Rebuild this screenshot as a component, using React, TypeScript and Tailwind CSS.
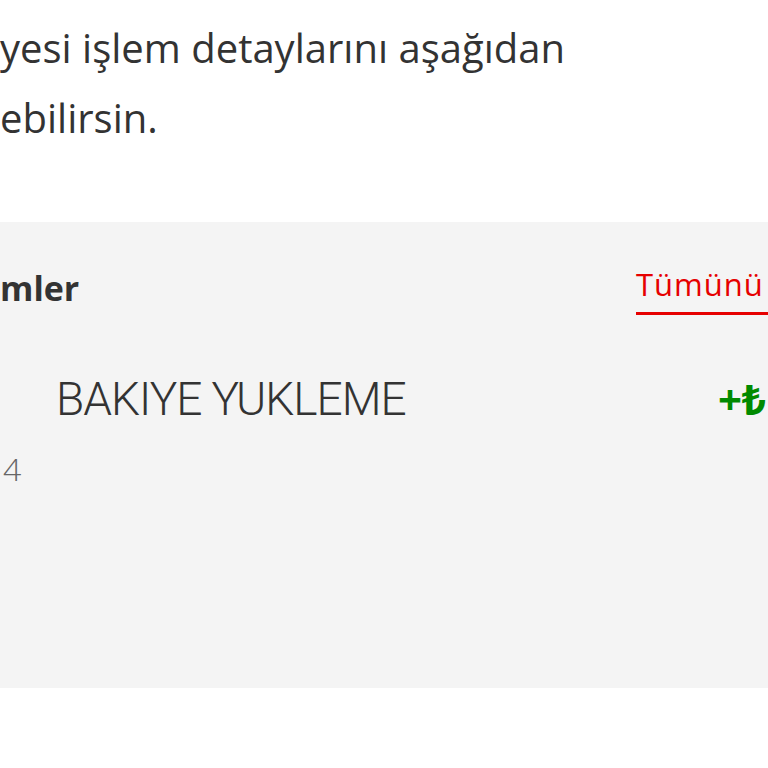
import React from "react";

export default function App() {
  return (
    <div className="w-[768px] h-[768px] overflow-hidden bg-white text-[#333333]" style={{ fontFamily: '"Open Sans", "Noto Sans", sans-serif' }}>
      <div className="pt-[13px] text-[40px] leading-[70px] whitespace-nowrap">
        <p>yesi işlem detaylarını aşağıdan</p>
        <p>ebilirsin.</p>
      </div>
      <div className="mt-[69px] h-[466px] bg-[#f4f4f4] flex flex-col">
        <div className="flex items-end justify-between pt-[44px] whitespace-nowrap">
          <h2 className="mb-[7px] text-[34px] font-bold leading-[40px] text-[#333333]">mler</h2>
          <a className="w-[132px] text-[31px] leading-[36px] tracking-[1px] text-[#e60000] border-b-[3px] border-[#e60000] pb-[10px]">Tümünü</a>
        </div>
        <div className="flex items-center justify-between mt-[58px] whitespace-nowrap">
          <span className="ml-[56px] text-[46px] leading-[52px] text-[#333333] font-light tracking-[-1px]" style={{ fontFamily: '"Roboto", sans-serif' }}>BAKIYE YUKLEME</span>
          <span className="w-[50px] text-[42px] font-bold leading-[52px] text-[#008a00]" style={{ fontFamily: '"Noto Sans", sans-serif' }}>+₺</span>
        </div>
        <div className="mt-[26px] ml-[3px] text-[32px] leading-[36px] font-light text-[#666666]">4</div>
      </div>
    </div>
  );
}
